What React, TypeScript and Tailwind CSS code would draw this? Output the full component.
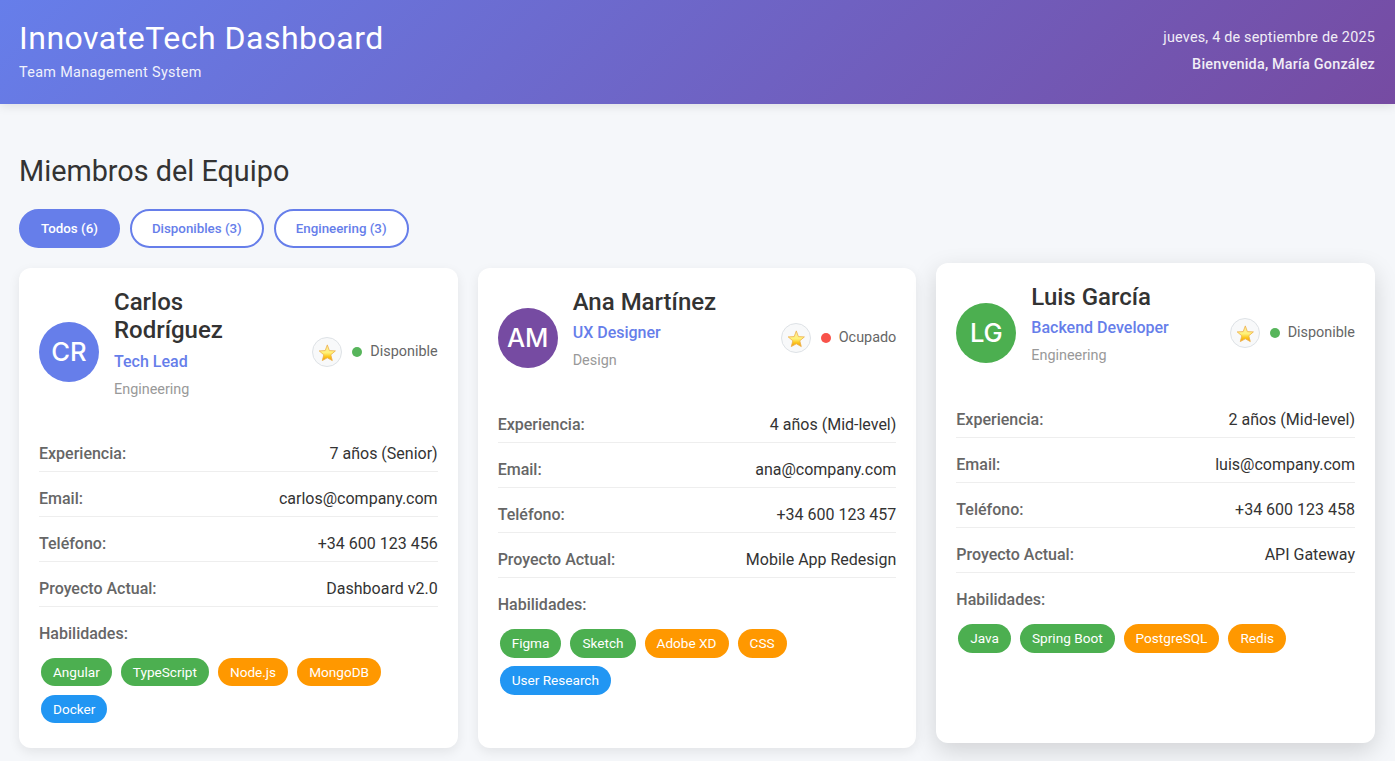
type Member = {
  initials: string;
  avatar: string;
  name: string;
  role: string;
  dept: string;
  available: boolean;
  raised?: boolean;
  details: [string, string][];
  skills: [string, string][];
};

const GREEN = 'bg-[#4caf50]';
const ORANGE = 'bg-[#ff9800]';
const BLUE = 'bg-[#2196f3]';

const members: Member[] = [
  {
    initials: 'CR',
    avatar: 'bg-[#667eea]',
    name: 'Carlos Rodríguez',
    role: 'Tech Lead',
    dept: 'Engineering',
    available: true,
    details: [
      ['Experiencia:', '7 años (Senior)'],
      ['Email:', 'carlos@company.com'],
      ['Teléfono:', '+34 600 123 456'],
      ['Proyecto Actual:', 'Dashboard v2.0'],
    ],
    skills: [
      ['Angular', GREEN],
      ['TypeScript', GREEN],
      ['Node.js', ORANGE],
      ['MongoDB', ORANGE],
      ['Docker', BLUE],
    ],
  },
  {
    initials: 'AM',
    avatar: 'bg-[#764ba2]',
    name: 'Ana Martínez',
    role: 'UX Designer',
    dept: 'Design',
    available: false,
    details: [
      ['Experiencia:', '4 años (Mid-level)'],
      ['Email:', 'ana@company.com'],
      ['Teléfono:', '+34 600 123 457'],
      ['Proyecto Actual:', 'Mobile App Redesign'],
    ],
    skills: [
      ['Figma', GREEN],
      ['Sketch', GREEN],
      ['Adobe XD', ORANGE],
      ['CSS', ORANGE],
      ['User Research', BLUE],
    ],
  },
  {
    initials: 'LG',
    avatar: 'bg-[#4caf50]',
    name: 'Luis García',
    role: 'Backend Developer',
    dept: 'Engineering',
    available: true,
    raised: true,
    details: [
      ['Experiencia:', '2 años (Mid-level)'],
      ['Email:', 'luis@company.com'],
      ['Teléfono:', '+34 600 123 458'],
      ['Proyecto Actual:', 'API Gateway'],
    ],
    skills: [
      ['Java', GREEN],
      ['Spring Boot', GREEN],
      ['PostgreSQL', ORANGE],
      ['Redis', ORANGE],
    ],
  },
];

function Star() {
  return (
    <svg width="18" height="18" viewBox="0 0 18 18" aria-hidden="true" className="mt-px">
      <defs>
        <linearGradient id="starFill" x1="0" y1="0" x2="0" y2="1">
          <stop offset="0" stopColor="#fbe9a0" />
          <stop offset="0.5" stopColor="#fff27a" />
          <stop offset="0.75" stopColor="#fcc61c" />
          <stop offset="1" stopColor="#f09a10" />
        </linearGradient>
      </defs>
      <path
        d="M9.3 .9 L11.4 6.6 L17.4 6.9 L12.8 10.8 L14.3 16.6 L9.3 13.8 L4.3 16.6 L5.8 10.8 L1.2 6.9 L7.2 6.6 Z"
        fill="url(#starFill)"
        stroke="#eeb04a"
        strokeWidth="0.8"
        strokeLinejoin="round"
      />
    </svg>
  );
}

function Card({ m }: { m: Member }) {
  return (
    <article
      className={
        m.raised
          ? 'h-[480px] -translate-y-[5px] rounded-xl bg-white p-5 shadow-[0_8px_25px_rgba(0,0,0,0.15)]'
          : 'h-[480px] rounded-xl bg-white p-5 shadow-[0_4px_12px_rgba(0,0,0,0.08)]'
      }
    >
      <div className="flex items-center">
        <div className={`flex size-[60px] shrink-0 items-center justify-center rounded-full font-[Inter,sans-serif] text-[25.6px] font-medium text-white ${m.avatar}`}>
          {m.initials}
        </div>
        <div className="ml-[15px] w-[150px] shrink-0">
          <h3 className="text-2xl leading-[28.3px] font-medium text-[#333]">{m.name}</h3>
          <p className="mt-[7.1px] text-base leading-5 font-medium whitespace-nowrap text-[#667eea]">{m.role}</p>
          <p className="mt-[8px] mb-[16.9px] text-[14.4px] leading-5 text-[#999]">{m.dept}</p>
        </div>
        <div className="ml-auto flex items-center">
          <div className="flex size-[30px] items-center justify-center rounded-full border border-[#dee2e6] bg-[#f8f9fa]">
            <Star />
          </div>
          <span className={`ml-[10px] size-[10px] rounded-full ${m.available ? 'bg-[#57b55b]' : 'bg-[#f8524a]'}`} />
          <span className="ml-2 text-[14.4px] leading-5 text-[#666]">{m.available ? 'Disponible' : 'Ocupado'}</span>
        </div>
      </div>
      <dl className="mt-[10px]">
        {m.details.map(([label, value]) => (
          <div key={label} className="flex h-[45px] justify-between border-b border-[#eee] pt-[17px] leading-5">
            <dt className="font-medium text-[#666]">{label}</dt>
            <dd className="text-[#333]">{value}</dd>
          </div>
        ))}
      </dl>
      <p className="mt-[17px] leading-5 font-medium text-[#666]">Habilidades:</p>
      <div className="mt-[13.95px] flex flex-wrap gap-x-[9.03px] gap-y-[8.8px] px-[2px]">
        {m.skills.map(([skill, color]) => (
          <span key={skill} className={`h-[28.4px] rounded-2xl px-3 pt-px text-[13.6px] leading-[27.4px] text-white ${color}`}>
            {skill}
          </span>
        ))}
      </div>
    </article>
  );
}

const filters = [
  { label: 'Todos (6)', active: true },
  { label: 'Disponibles (3)', active: false },
  { label: 'Engineering (3)', active: false },
];

export default function App() {
  return (
    <div className="h-[761px] overflow-hidden bg-[#f5f7fa] font-[Roboto,sans-serif]">
      <header className="flex h-[104px] items-center justify-between bg-[linear-gradient(135deg,#667eea_0%,#764ba2_100%)] pr-5 pb-[3px] pl-[19px] text-white shadow-[0_2px_10px_rgba(0,0,0,0.1)]">
        <div>
          <h1 className="text-[32px] leading-[38px] tracking-[0.5px]">InnovateTech Dashboard</h1>
          <p className="mt-[6px] text-[14.4px] leading-5 tracking-[0.32px] opacity-90">Team Management System</p>
        </div>
        <div className="pt-px text-right text-[14.4px] leading-5 tracking-[0.2px] opacity-90">
          <p>jueves, 4 de septiembre de 2025</p>
          <p className="mt-[7px] font-medium">Bienvenida, María González</p>
        </div>
      </header>
      <main className="pt-[50px] pr-5 pl-[19px]">
        <h2 className="text-[28.8px] leading-[34px] text-[#333]">Miembros del Equipo</h2>
        <div className="mt-[21px] flex gap-[10px]">
          {filters.map((f) => (
            <button
              key={f.label}
              className={
                f.active
                  ? 'h-[39px] rounded-full border-2 border-[#667eea] bg-[#667eea] px-5 text-[13.333px] font-medium text-white'
                  : 'h-[39px] rounded-full border-2 border-[#667eea] bg-white px-5 text-[13.333px] font-medium text-[#667eea]'
              }
            >
              {f.label}
            </button>
          ))}
        </div>
        <section className="mt-5 grid grid-cols-3 gap-5">
          {members.map((m) => (
            <Card key={m.name} m={m} />
          ))}
        </section>
      </main>
    </div>
  );
}
